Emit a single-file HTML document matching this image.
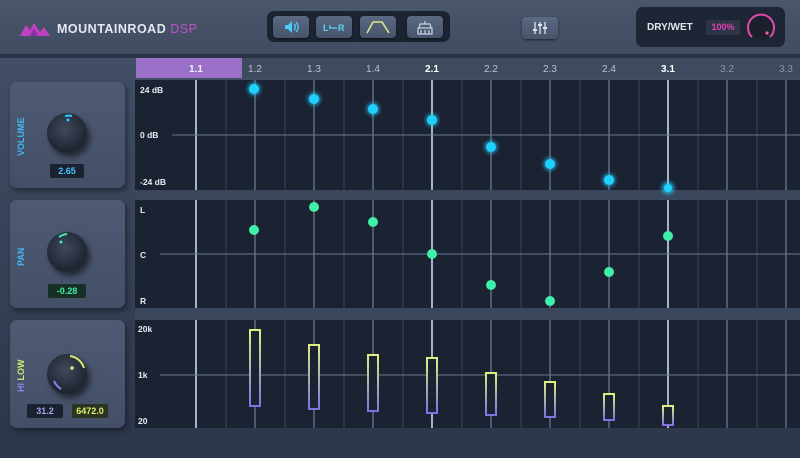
<!DOCTYPE html><html><head><style>
body{margin:0;width:800px;height:458px;overflow:hidden;background:linear-gradient(180deg,#46536a 0%,#3a465c 40%,#2c364a 100%);font-family:"Liberation Sans",sans-serif;position:relative}
.a{position:absolute}
.btn{position:absolute;top:16px;height:22px;width:36px;background:linear-gradient(#5a6a82,#46546b);border-radius:4px;box-shadow:0 1px 2px #0008;color:#6cc8f0;font-size:10px;font-weight:bold;text-align:center;line-height:22px}
.btn svg{position:absolute;left:0;top:0}
.pnl{position:absolute;left:10px;width:115px;background:linear-gradient(#4e5a74,#444f67);border-radius:7px;box-shadow:2px 3px 6px #0006}
.lbl{position:absolute;font-size:9px;transform:rotate(-90deg);transform-origin:left top;font-weight:bold}
.val{position:absolute;font-size:9px;font-weight:bold;background:#1a2232;border-radius:2px;text-align:center;line-height:14px;height:14px}
.knob{position:absolute;width:40px;height:40px;border-radius:50%;background:radial-gradient(circle at 45% 40%,#3f4a5c,#1e2430 70%);box-shadow:3px 4px 6px #0008}
</style></head><body>
<div class="a" style="left:0;top:0;width:800px;height:54px;background:linear-gradient(#4a566c,#404c62)"></div>
<svg class="a" style="left:20px;top:22px" width="32" height="14"><polygon points="0,14 6,3 10,8 14,1 20,10 24,5 30,14" fill="#c040c0"/><polygon points="10,14 14,6 18,14" fill="#8a30a0"/></svg>
<div class="a" style="left:57px;top:22px;font-size:12.5px;font-weight:bold;color:#e4e8f0;letter-spacing:.5px">MOUNTAINROAD <span style="color:#c050c8;font-weight:normal">DSP</span></div>
<div class="a" style="left:267px;top:11px;width:183px;height:31px;background:#1c2434;border-radius:7px"></div>
<div class="btn" style="left:273px"><svg width="36" height="22"><path d="M12 9h3l4-4v12l-4-4h-3z" fill="#50c8f8"/><path d="M21 8a4 4 0 0 1 0 6M23 6a7 7 0 0 1 0 10" stroke="#50c8f8" stroke-width="1.4" fill="none"/></svg></div>
<div class="btn" style="left:316px"><svg width="36" height="22"><text x="7" y="15" font-family="Liberation Sans" font-size="9" font-weight="bold" fill="#60d0f0">L</text><path d="M13 12h8" stroke="#60d0f0" stroke-width="1.3"/><path d="M14 9v3" stroke="#60d0f0" stroke-width="1.3"/><text x="22" y="15" font-family="Liberation Sans" font-size="9" font-weight="bold" fill="#60d0f0">R</text></svg></div>
<div class="btn" style="left:360px"><svg width="36" height="22"><path d="M7 17 L13 6 H22 L29 17" stroke="#d8e890" stroke-width="1.6" fill="none"/></svg></div>
<div class="btn" style="left:407px"><svg width="36" height="22"><path d="M18 5v3M11 12h14v6H11zM12 12l1-4h10l1 4M14 14v4M18 14v4M22 14v4" stroke="#c8d4e4" stroke-width="1.2" fill="none"/></svg></div>
<div class="btn" style="left:522px;top:17px;width:36px"><svg width="36" height="22"><g stroke="#e0e4ec" stroke-width="1.3"><path d="M13 5v12M18 5v12M23 5v12"/></g><g fill="#e0e4ec"><rect x="11" y="12" width="4" height="2"/><rect x="16" y="7" width="4" height="2"/><rect x="21" y="10" width="4" height="2"/></g></svg></div>
<div class="a" style="left:636px;top:7px;width:149px;height:40px;background:#1e2636;border-radius:7px"></div>
<div class="a" style="left:647px;top:22px;font-size:10px;font-weight:bold;color:#e0e4ec">DRY/WET</div>
<div class="a" style="left:706px;top:20px;width:34px;height:15px;background:#2c3446;color:#e040b0;font-size:9px;font-weight:bold;text-align:center;line-height:15px">100%</div>
<svg class="a" style="left:743px;top:10px" width="36" height="34"><circle cx="18" cy="17" r="13" fill="#1a202c"/><path d="M9 27 A13 13 0 1 1 27 27" stroke="#e04aa8" stroke-width="2" fill="none"/><circle cx="24" cy="23" r="1.6" fill="#f060c0"/></svg>
<div class="a" style="left:0;top:54px;width:800px;height:4px;background:#2a3446"></div>
<div class="a" style="left:136px;top:58px;width:664px;height:20px;background:#3e4a5e"></div>
<div class="a" style="left:136px;top:58px;width:106px;height:20px;background:#9a70c8"></div>
<svg class="a" style="left:0;top:58px" width="800" height="400" font-family="Liberation Sans" font-size="10" text-anchor="middle">
<g fill="#b8c0d0"><text x="196" y="14" fill="#eef" font-weight="bold">1.1</text><text x="255" y="14">1.2</text><text x="314" y="14">1.3</text><text x="373" y="14">1.4</text><text x="432" y="14" fill="#fff" font-weight="bold">2.1</text><text x="491" y="14">2.2</text><text x="550" y="14">2.3</text><text x="609" y="14">2.4</text><text x="668" y="14" fill="#fff" font-weight="bold">3.1</text><text x="727" y="14" fill="#8a94a8">3.2</text><text x="786" y="14" fill="#8a94a8">3.3</text></g>
</svg>
<svg class="a" style="left:0;top:0" width="800" height="458" font-family="Liberation Sans" font-size="8.5" font-weight="bold">
<defs><filter id="g"><feGaussianBlur stdDeviation="2"/></filter><linearGradient id="bg" x1="0" y1="0" x2="0" y2="1"><stop offset="0" stop-color="#e0f080"/><stop offset="1" stop-color="#8070e0"/></linearGradient></defs>
<rect x="135" y="80" width="665" height="110" fill="#1b2232"/>
<rect x="135" y="200" width="665" height="108" fill="#1b2232"/>
<rect x="135" y="320" width="665" height="108" fill="#1b2232"/>
<g stroke="#3a465a" stroke-width="1">
<path d="M226 80V428M285 80V428M344 80V428M403 80V428M462 80V428M521 80V428M580 80V428M639 80V428M698 80V428M757 80V428"/></g>
<g stroke="#8090a8" stroke-width="1"><path d="M255 80V428M314 80V428M373 80V428M491 80V428M550 80V428M609 80V428M727 80V428M786 80V428"/></g>
<g stroke="#c8d8f0" stroke-width="1.6"><path d="M196 80V428M432 80V428M668 80V428"/></g>
<g stroke="#6a7890"><path d="M172 135H800M160 254H800M160 375H800"/></g>
<rect x="135" y="190" width="665" height="10" fill="#3a465b"/><rect x="135" y="308" width="665" height="12" fill="#3a465b"/>
<g fill="#e8ecf4"><text x="140" y="93">24 dB</text><text x="140" y="138">0 dB</text><text x="140" y="185">-24 dB</text><text x="140" y="213">L</text><text x="140" y="258">C</text><text x="140" y="304">R</text><text x="138" y="332">20k</text><text x="138" y="378">1k</text><text x="138" y="424">20</text></g>
<g fill="#20d0ff"><g filter="url(#g)" opacity=".8"><circle cx="254" cy="89" r="6"/><circle cx="314" cy="99" r="6"/><circle cx="373" cy="109" r="6"/><circle cx="432" cy="120" r="6"/><circle cx="491" cy="147" r="6"/><circle cx="550" cy="164" r="6"/><circle cx="609" cy="180" r="6"/><circle cx="668" cy="188" r="6"/></g>
<circle cx="254" cy="89" r="5"/><circle cx="314" cy="99" r="5"/><circle cx="373" cy="109" r="5"/><circle cx="432" cy="120" r="5"/><circle cx="491" cy="147" r="5"/><circle cx="550" cy="164" r="5"/><circle cx="609" cy="180" r="5"/><circle cx="668" cy="188" r="4"/></g>
<g fill="#40f0a8"><circle cx="254" cy="230" r="5"/><circle cx="314" cy="207" r="5"/><circle cx="373" cy="222" r="5"/><circle cx="432" cy="254" r="5"/><circle cx="491" cy="285" r="5"/><circle cx="550" cy="301" r="5"/><circle cx="609" cy="272" r="5"/><circle cx="668" cy="236" r="5"/></g>
<g fill="#1b2232" stroke="url(#bg)" stroke-width="2">
<rect x="250" y="330" width="10" height="76"/><rect x="309" y="345" width="10" height="64"/><rect x="368" y="355" width="10" height="56"/><rect x="427" y="358" width="10" height="55"/><rect x="486" y="373" width="10" height="42"/><rect x="545" y="382" width="10" height="35"/><rect x="604" y="394" width="10" height="26"/><rect x="663" y="406" width="10" height="19"/></g>
</svg>
<div class="pnl" style="top:82px;height:106px"></div>
<div class="pnl" style="top:200px;height:108px"></div>
<div class="pnl" style="top:320px;height:108px"></div>
<div class="lbl" style="left:16px;top:156px;color:#40b8f0">VOLUME</div>
<div class="lbl" style="left:16px;top:266px;color:#40b8f0">PAN</div>
<div class="lbl" style="left:16px;top:392px;color:#d0e870"><span style="color:#9080f0">HI</span> LOW</div>
<div class="knob" style="left:47px;top:113px"></div>
<div class="knob" style="left:47px;top:232px"></div>
<div class="knob" style="left:47px;top:354px"></div>
<svg class="a" style="left:45px;top:110px" width="46" height="46"><circle cx="23" cy="10" r="1.5" fill="#30c8ff"/><path d="M20 6 A17 17 0 0 1 27 6" stroke="#30c8ff" stroke-width="2" fill="none"/></svg>
<svg class="a" style="left:45px;top:229px" width="46" height="46"><circle cx="16" cy="13" r="1.5" fill="#40f0b0"/><path d="M14 8 A17 17 0 0 1 22 5" stroke="#40f0b0" stroke-width="2" fill="none"/></svg>
<svg class="a" style="left:45px;top:351px" width="46" height="46"><circle cx="27" cy="17" r="1.8" fill="#d8f070"/><path d="M25 5 A17 17 0 0 1 39 17" stroke="#d8f070" stroke-width="2" fill="none"/><path d="M9 30 A17 17 0 0 0 16 38" stroke="#9080f0" stroke-width="2" fill="none"/></svg>
<div class="val" style="left:50px;top:164px;width:34px;color:#40c8ff">2.65</div>
<div class="val" style="left:48px;top:284px;width:38px;color:#40f0a0;background:#163028">-0.28</div>
<div class="val" style="left:27px;top:404px;width:36px;color:#b0a0f0">31.2</div>
<div class="val" style="left:72px;top:404px;width:36px;color:#e0f070;background:#2a3420">6472.0</div>
</body></html>
